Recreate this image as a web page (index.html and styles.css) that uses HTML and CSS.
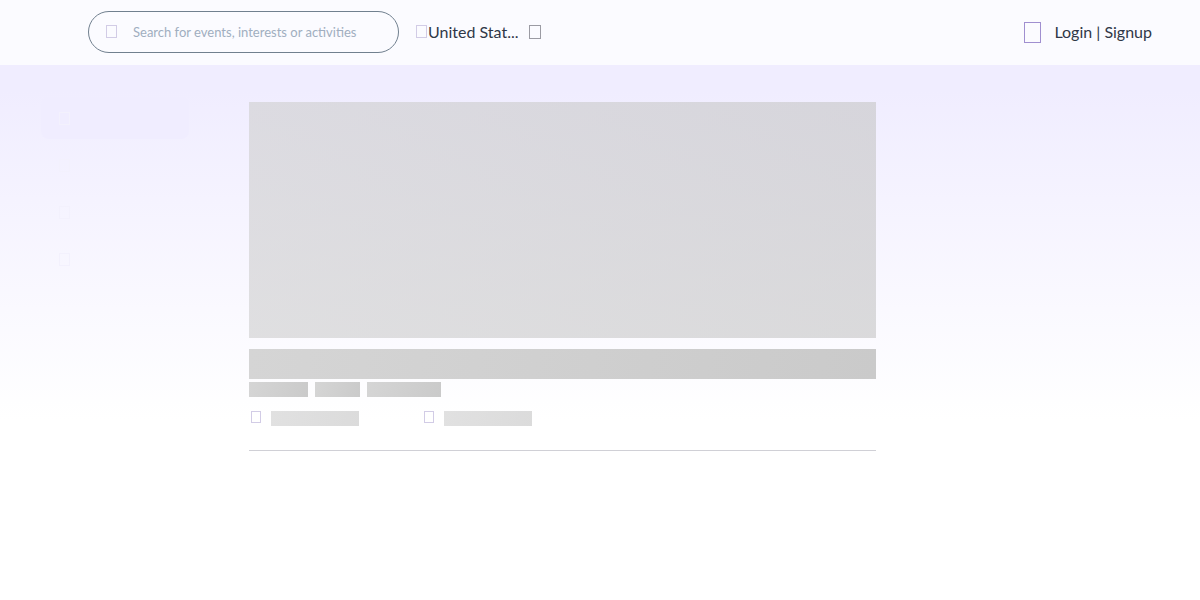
FILE: index.html
```html
<!DOCTYPE html>
<html lang="en">
<head>
  <meta charset="UTF-8">
  <meta name="viewport" content="width=device-width, initial-scale=1.0">
  <title>Events</title>
  <link rel="stylesheet" href="styles.css">
</head>
<body>
  <header class="navbar">
    <form class="search">
      <label class="search-icon" for="searchInput">
        <svg width="11" height="13" viewBox="0 0 11 13"><rect x="0.5" y="0.5" width="10" height="12" /></svg>
      </label>
      <input type="search" id="searchInput" class="search-input" aria-label="Search" placeholder="Search for events, interests or activities">
    </form>

    <div class="location">
      <label for="locationSelect">
        <svg class="pin" width="11" height="13" viewBox="0 0 11 13"><rect x="0.5" y="0.5" width="10" height="12" /></svg>
      </label>
      <select id="locationSelect" class="location-select" aria-label="Location">
        <option>United Stat...</option>
      </select>
      <svg class="caret" width="12" height="15" viewBox="0 0 12 15"><rect x="0.5" y="1.5" width="11" height="13" /></svg>
    </div>

    <button type="button" class="login">
      <svg width="17" height="23" viewBox="0 0 17 23"><rect x="0.5" y="2.5" width="16" height="20" /></svg>
      Login | Signup
    </button>
  </header>

  <div class="page">
    <nav class="sidebar">
      <a href="#" class="side-link active" aria-label="Home"><svg width="11" height="13" viewBox="0 0 11 13"><rect x="0.5" y="0.5" width="10" height="12" /></svg></a>
      <a href="#" class="side-link" aria-label="Explore"><svg width="11" height="13" viewBox="0 0 11 13"><rect x="0.5" y="0.5" width="10" height="12" /></svg></a>
      <a href="#" class="side-link" aria-label="Groups"><svg width="11" height="13" viewBox="0 0 11 13"><rect x="0.5" y="0.5" width="10" height="12" /></svg></a>
      <a href="#" class="side-link" aria-label="Calendar"><svg width="11" height="13" viewBox="0 0 11 13"><rect x="0.5" y="0.5" width="10" height="12" /></svg></a>
    </nav>

    <main class="event">
      <div class="skeleton light banner"></div>
      <div class="skeleton title"></div>
      <div class="tags">
        <div class="skeleton tag"></div>
        <div class="skeleton tag short"></div>
        <div class="skeleton tag long"></div>
      </div>
      <div class="details">
        <div class="detail">
          <svg width="10" height="12" viewBox="0 0 10 12"><rect x="0.5" y="0.5" width="9" height="11" /></svg>
          <div class="skeleton light line"></div>
        </div>
        <div class="detail">
          <svg width="10" height="12" viewBox="0 0 10 12"><rect x="0.5" y="0.5" width="9" height="11" /></svg>
          <div class="skeleton light line"></div>
        </div>
      </div>
    </main>
  </div>
</body>
</html>
```

FILE: styles.css
```css
* {
  box-sizing: border-box;
}
body {
  margin: 0;
  min-height: 100vh;
  font-family: Lato, sans-serif;
  color: #2f3747;
  background: #fff linear-gradient(#f0edff 90px, #fff 420px) no-repeat;
}
svg {
  display: block;
  flex: none;
  fill: none;
  stroke: #d2cce6;
}
.navbar {
  display: flex;
  align-items: center;
  height: 65px;
  padding: 0 48px 2px 88px;
  background: rgba(255, 255, 255, 0.75);
}
.search {
  display: flex;
  align-items: center;
  width: 311px;
  height: 42px;
  padding: 0 17px;
  border: 1px solid #71808f;
  border-radius: 21px;
}
.search-input {
  flex: 1;
  min-width: 0;
  margin-left: 16px;
  padding: 0;
  border: 0;
  outline: 0;
  background: none;
  font: 13px Lato, sans-serif;
}
.search-input::placeholder {
  color: #a0aec0;
}
.location {
  display: flex;
  align-items: center;
  margin-left: 17px;
}
.location-select {
  width: 90px;
  margin: 0 11px 0 1px;
  padding: 0;
  border: 0;
  appearance: none;
  background: none;
  color: inherit;
  font: 16px Lato, sans-serif;
}
.caret {
  stroke: #9b9ba3;
}
.login {
  display: flex;
  align-items: center;
  gap: 13px;
  margin-left: auto;
  padding: 0;
  border: 0;
  background: none;
  color: inherit;
  font: 16px Lato, sans-serif;
  cursor: pointer;
}
.login svg {
  stroke: #a08fd0;
}
.page {
  display: flex;
  padding: 32px 41px;
}
.sidebar {
  width: 148px;
  margin-right: 60px;
}
.side-link {
  display: flex;
  align-items: center;
  height: 42px;
  margin-bottom: 5px;
  padding-left: 18px;
  border-radius: 8px;
}
.side-link svg {
  stroke: #f3f1fd;
}
.active {
  background: #f0edff;
}
.event {
  flex: 1;
  margin-right: 283px;
  padding: 5px 0 24px;
  border-bottom: 1px solid #d0d0d6;
}
.skeleton {
  background: linear-gradient(100deg, #d5d5d5, #cacaca);
}
.light {
  background: linear-gradient(100deg, rgba(208, 208, 208, 0.64), rgba(199, 199, 199, 0.64));
}
.banner {
  height: 236px;
}
.title {
  height: 30px;
  margin-top: 11px;
}
.tags {
  display: flex;
  gap: 7px;
  margin-top: 3px;
}
.tag {
  width: 59px;
  height: 15px;
}
.short {
  width: 45px;
}
.long {
  width: 74px;
}
.details {
  display: flex;
  margin-top: 14px;
}
.detail {
  display: flex;
  gap: 10px;
  width: 173px;
  padding-left: 2px;
}
.line {
  width: 88px;
  height: 15px;
}
```
